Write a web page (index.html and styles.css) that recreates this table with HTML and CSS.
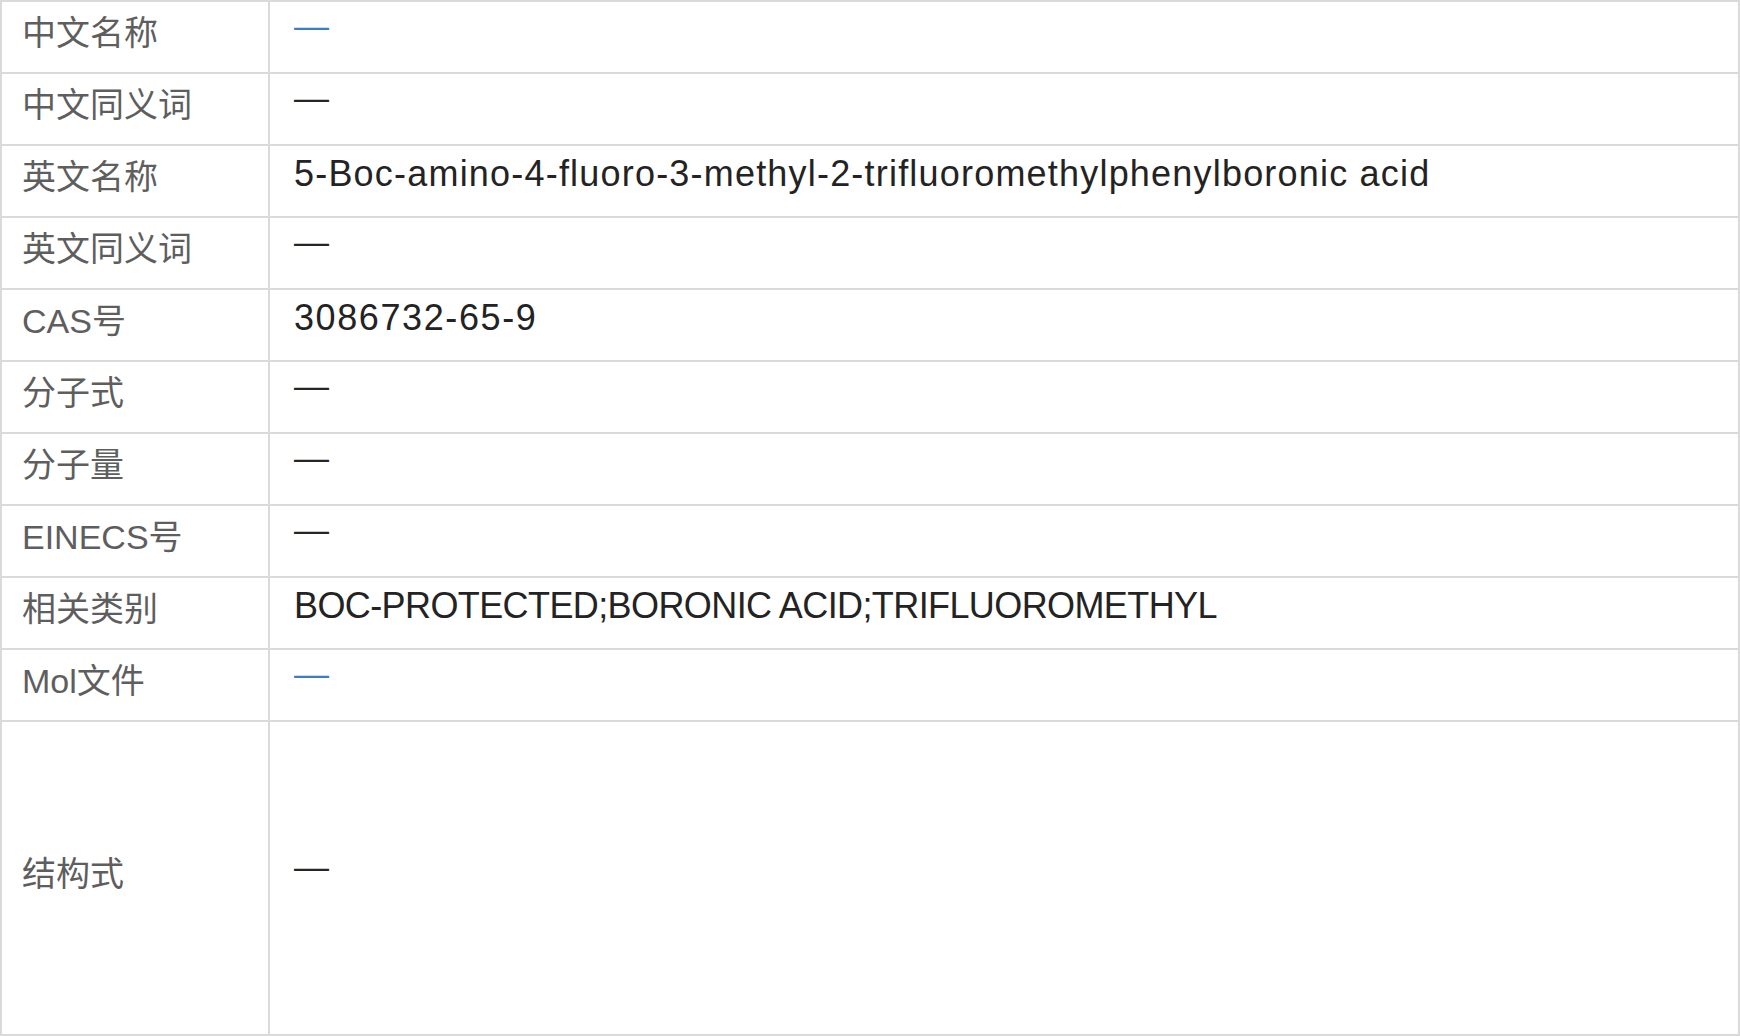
FILE: index.html
```html
<!DOCTYPE html>
<html lang="zh-CN">
<head>
<meta charset="utf-8">
<title>化合物信息</title>
<link rel="stylesheet" href="styles.css">
</head>
<body>
<div class="sheet">
  <div class="row"><div class="label">中文名称</div><div class="value"><span class="dash link">—</span></div></div>
  <div class="row"><div class="label">中文同义词</div><div class="value"><span class="dash">—</span></div></div>
  <div class="row"><div class="label">英文名称</div><div class="value">5-Boc-amino-4-fluoro-3-methyl-2-trifluoromethylphenylboronic acid</div></div>
  <div class="row"><div class="label">英文同义词</div><div class="value"><span class="dash">—</span></div></div>
  <div class="row"><div class="label">CAS号</div><div class="value digits">3086732-65-9</div></div>
  <div class="row"><div class="label">分子式</div><div class="value"><span class="dash">—</span></div></div>
  <div class="row"><div class="label">分子量</div><div class="value"><span class="dash">—</span></div></div>
  <div class="row"><div class="label">EINECS号</div><div class="value"><span class="dash">—</span></div></div>
  <div class="row"><div class="label">相关类别</div><div class="value narrow">BOC-PROTECTED;BORONIC ACID;TRIFLUOROMETHYL</div></div>
  <div class="row"><div class="label">Mol文件</div><div class="value"><span class="dash link">—</span></div></div>
  <div class="row tall"><div class="label">结构式</div><div class="value"><span class="dash">—</span></div></div>
</div>
</body>
</html>
```

FILE: styles.css
```css
html, body {
  margin: 0;
  padding: 0;
  background: #ffffff;
}

body {
  width: 1740px;
  height: 1036px;
  overflow: hidden;
}

.sheet {
  border-top: 2px solid #dadada;
  border-left: 2px solid #dadada;
  border-right: 2px solid #dadada;
  width: 1740px;
  box-sizing: border-box;
}

.row {
  display: flex;
  height: 72px;
  border-bottom: 2px solid #dadada;
  box-sizing: border-box;
}

.row.tall {
  height: 314px;
}

.label {
  width: 268px;
  flex: none;
  box-sizing: border-box;
  border-right: 2px solid #dadada;
  padding-left: 20px;
  padding-bottom: 13px;
  display: flex;
  align-items: center;
  font-family: "Liberation Sans", "Noto Sans CJK SC", sans-serif;
  font-size: 34px;
  color: #5e5e5e;
}

.value {
  flex: 1;
  padding-left: 24px;
  padding-bottom: 14px;
  display: flex;
  align-items: center;
  font-family: "Liberation Sans", "Noto Sans CJK SC", sans-serif;
  font-size: 36px;
  letter-spacing: 1.2px;
  color: #232323;
}

.value.digits {
  letter-spacing: 1.6px;
}

.value.narrow {
  letter-spacing: -0.6px;
}

.dash {
  font-family: "Liberation Sans", sans-serif;
  font-size: 35px;
  letter-spacing: 0;
  color: #262626;
  margin-bottom: 8px;
}

.dash.link {
  color: #3d7fc6;
}
```
